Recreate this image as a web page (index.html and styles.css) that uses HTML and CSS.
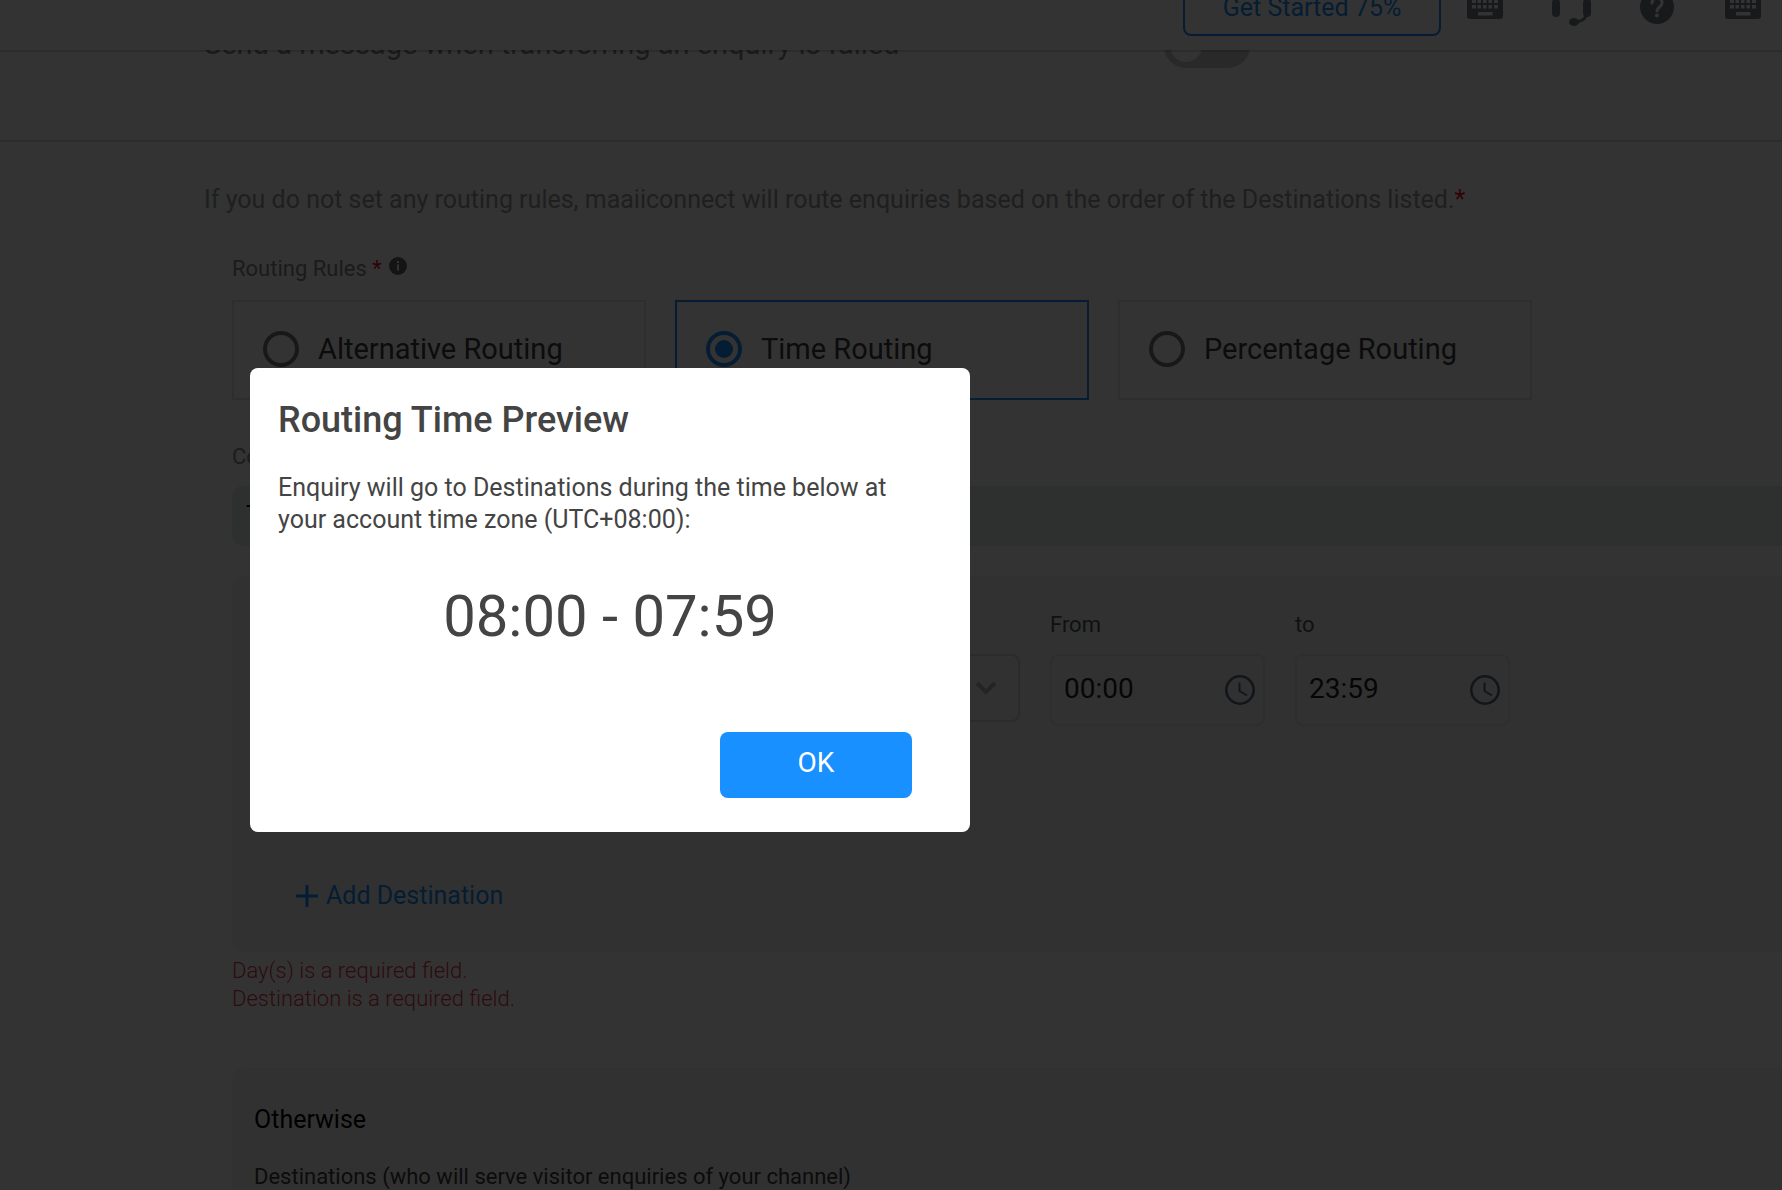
FILE: index.html
```html
<!DOCTYPE html>
<html lang="en">
	<head>
		<meta charset="UTF-8">
		<title>Routing Rules</title>
		<link rel="stylesheet" href="styles.css">
	</head>
	<body>
		<svg class="sprite" width="0" height="0" aria-hidden="true">
			<symbol id="keyboard" viewBox="0 0 36 24">
				<path fill-rule="evenodd" d="M3 0h30a3 3 0 0 1 3 3v18a3 3 0 0 1-3 3H3a3 3 0 0 1-3-3V3a3 3 0 0 1 3-3z
					M5 4v4h4V4z M10.500 4v4h3.500V4z M16 4v4h3.500V4z M21.500 4v4h3.500V4z M27 4v4h4V4z
					M5 10v3.500h4V10z M10.500 10v3.500h3.500V10z M16 10v3.500h3.500V10z M21.500 10v3.500h3.500V10z M27 10v3.500h4V10z
					M11 17v3.500h14.500V17z"/>
			</symbol>
			<symbol id="clock" viewBox="0 0 30 30">
				<g fill="none" stroke="currentColor">
					<circle cx="15" cy="15" r="13.700" stroke-width="2.600"/>
					<path d="M14.500 7.500v8.500l7.500 4.500" stroke-width="2"/>
				</g>
			</symbol>
		</svg>

		<header class="topbar">
			<button class="get-started" type="button">Get Started 75%</button>
			<nav class="tools">
				<button type="button" aria-label="Keyboard">
					<svg width="36" height="24"><use href="#keyboard"/></svg>
				</button>
				<button type="button" aria-label="Support">
					<svg width="40" height="38" viewBox="0 0 40 38">
						<path d="M4.500 16v-1a15.500 13.500 0 0 1 31 0v1M36 26c-2 6-6 8-13 8" fill="none" stroke="currentColor" stroke-width="3"/>
						<rect x="1" y="11" width="8" height="18" rx="4"/>
						<rect x="32" y="11" width="8" height="18" rx="4"/>
						<ellipse cx="23" cy="34" rx="5" ry="4"/>
					</svg>
				</button>
				<button type="button" aria-label="Help">
					<svg width="34" height="34" viewBox="0 0 34 34">
						<circle cx="17" cy="17" r="17"/>
						<path d="M12 13c0-7 10.500-6.500 10 0 0 4-5 4-5 8" fill="none" stroke="#fff" stroke-width="3" stroke-linecap="round"/>
						<circle cx="17" cy="25.500" r="2" fill="#fff"/>
					</svg>
				</button>
				<button type="button" aria-label="Keyboard shortcuts">
					<svg width="36" height="24"><use href="#keyboard"/></svg>
				</button>
			</nav>
		</header>

		<main>
			<section class="transfer">
				<label for="transferMsg">Send a message when transferring an enquiry is failed</label>
				<input id="transferMsg" class="toggle" type="checkbox">
			</section>

			<p class="hint">If you do not set any routing rules, maaiiconnect will route enquiries based on the order of the Destinations listed.<span class="star">*</span></p>

			<section class="rules">
				<div class="rules-title">
					Routing Rules <span class="star">*</span>
					<svg class="info" width="18" height="18" viewBox="0 0 18 18">
						<circle cx="9" cy="9" r="9" fill="currentColor"/>
						<path d="M9 4v2M9 7.500v6" stroke="#fff" stroke-width="2"/>
					</svg>
				</div>
				<div class="rule-list">
					<label class="rule"><input type="radio" name="rule">Alternative Routing</label>
					<label class="rule chosen"><input type="radio" name="rule" checked>Time Routing</label>
					<label class="rule"><input type="radio" name="rule">Percentage Routing</label>
				</div>

				<div class="condition-title">Condition</div>
				<div class="condition">Time</div>

				<div class="panel">
					<div class="fields">
						<div class="field day">
							<label for="day">Day(s)</label>
							<div class="select-box">
								<select id="day"><option></option></select>
								<svg width="22" height="14" viewBox="0 0 22 14"><path d="M2 2l9 9 9-9" fill="none" stroke="currentColor" stroke-width="4"/></svg>
							</div>
						</div>
						<div class="field">
							<label for="from">From</label>
							<div class="time-box">
								<input id="from" type="text" value="00:00">
								<svg width="30" height="30"><use href="#clock"/></svg>
							</div>
						</div>
						<div class="field">
							<label for="to">to</label>
							<div class="time-box">
								<input id="to" type="text" value="23:59">
								<svg width="30" height="30"><use href="#clock"/></svg>
							</div>
						</div>
					</div>
					<button class="add" type="button">
						<svg width="22" height="22" viewBox="0 0 22 22"><path d="M11 0v22M0 11h22" stroke="currentColor" stroke-width="3"/></svg>
						Add Destination
					</button>
				</div>
				<div class="errors">
					<p>Day(s) is a required field.</p>
					<p>Destination is a required field.</p>
				</div>

				<div class="panel otherwise">
					<h3>Otherwise</h3>
					<p>Destinations (who will serve visitor enquiries of your channel)</p>
				</div>
			</section>
		</main>

		<div class="mask">
			<div class="dialog" role="dialog" aria-labelledby="dialogTitle">
				<h2 id="dialogTitle">Routing Time Preview</h2>
				<p class="dialog-text">Enquiry will go to Destinations during the time below at your account time zone (UTC+08:00):</p>
				<p class="dialog-time">08:00 - 07:59</p>
				<button class="ok" type="button">OK</button>
			</div>
		</div>
	</body>
</html>
```
FILE: styles.css
```css
*{margin: 0;padding: 0;box-sizing: border-box;}
body{
	height: 100vh;
	overflow: hidden;
	background: #fff;
	font-family: Roboto, sans-serif;
	font-size: 22px;
	line-height: 30px;
}
button, input, select{
	font-family: inherit;
	background: none;
	border: none;
}
.sprite{position: absolute;}

/* top bar */
.topbar{
	position: relative;
	z-index: 1;
	display: flex;
	justify-content: flex-end;
	align-items: center;
	gap: 24px;
	height: 88px;
	margin-top: -36px;
	padding-right: 19px;
	background: #fff;
	background-clip: padding-box;
	border-bottom: 2px solid rgba(0,0,0,.14);
}
.get-started{
	width: 258px;
	height: 58px;
	border: 2px solid #1890ff;
	border-radius: 8px;
	color: #1890ff;
	font-size: 25px;
}
.tools{
	display: flex;
	gap: 46px;
}
.tools button{
	display: flex;
	justify-content: center;
	align-items: center;
	width: 40px;
	color: #797f86;
}
.tools svg{fill: currentColor;}

/* transfer message */
.transfer{
	display: flex;
	margin-top: -28px;
	padding: 0 0 72px 204px;
	border-bottom: 2px solid #ddd;
	color: #888;
	font-size: 29px;
	line-height: 40px;
}
.transfer label{flex: 0 0 960px;}
.toggle{
	appearance: none;
	width: 86px;
	height: 44px;
	padding: 6px;
	border-radius: 22px;
	background: #ccc;
}
.toggle::before{
	content: "";
	display: block;
	width: 32px;
	height: 32px;
	border-radius: 50%;
	background: #fff;
}

.hint{
	margin: 42px 0 38px 204px;
	color: #999;
	font-size: 25px;
	line-height: 32px;
}
.star{color: #e8112d;}

/* routing rules */
.rules{margin-left: 232px;}
.rules-title, .condition-title{color: #888;}
.info{
	margin-left: 2px;
	vertical-align: 1px;
	color: #666;
}
.rule-list{
	display: flex;
	gap: 29px;
	margin: 16px 0 42px;
}
.rule{
	display: flex;
	align-items: center;
	gap: 19px;
	width: 414px;
	height: 100px;
	padding: 0 29px 2px;
	border: 2px solid #e4e4e4;
	color: #3c3c3c;
	font-size: 29px;
}
.rule input{
	appearance: none;
	width: 36px;
	height: 36px;
	padding: 5px;
	border: 4px solid #777;
	border-radius: 50%;
}
.rule.chosen, .rule input:checked{border-color: #1890ff;}
.rule input:checked::before{
	content: "";
	display: block;
	width: 18px;
	height: 18px;
	border-radius: 50%;
	background: #1890ff;
}
.condition{
	margin: 14px 0 30px;
	padding: 14px;
	border-radius: 10px 0 0 10px;
	background: #e1efeb;
	font-size: 25px;
	line-height: 32px;
}
.panel{
	padding: 34px 64px 40px;
	border-radius: 12px 0 0 12px;
	background: #f5f5f5;
}
.fields{
	display: flex;
	gap: 30px;
	margin-bottom: 154px;
}
.field{
	width: 215px;
	color: #4a5a58;
}
.field.day{width: 724px;}
.select-box, .time-box{
	display: flex;
	align-items: center;
	position: relative;
	margin-top: 14px;
}
.select-box select{
	appearance: none;
	width: 100%;
	height: 68px;
	border: 2px solid #d4d4d4;
	border-radius: 8px;
}
.time-box input{
	width: 100%;
	height: 72px;
	padding: 0 50px 4px 12px;
	border: 2px solid #e4e4e4;
	border-radius: 8px;
	color: #1f1f1f;
	font-size: 28px;
}
.select-box svg, .time-box svg{
	position: absolute;
	right: 10px;
	color: #557089;
}
.select-box svg{
	right: 23px;
	color: #b4b4b4;
}
.add{
	display: flex;
	align-items: center;
	gap: 8px;
	color: #1890ff;
	font-size: 25px;
	line-height: 32px;
}
.errors{
	margin: 5px 0 55px;
	color: #e5394d;
	font-weight: 300;
	line-height: 28px;
}
.otherwise{
	padding: 36px 22px;
	color: #3c3c3c;
}
.otherwise h3{
	margin-bottom: 26px;
	color: #000;
	font-size: 25px;
	font-weight: 400;
	line-height: 32px;
}

/* dialog */
.mask{
	position: fixed;
	top: 0;
	left: 0;
	right: 0;
	bottom: 0;
	z-index: 10;
	padding: 368px 250px;
	background: rgba(0,0,0,.8);
}
.dialog{
	display: flex;
	flex-direction: column;
	max-width: 720px;
	padding: 30px 28px 34px;
	border-radius: 8px;
	background: #fff;
	color: #444;
}
.dialog h2{
	font-size: 36px;
	font-weight: 500;
	line-height: 44px;
}
.dialog-text{
	margin: 30px 0 46px;
	padding-right: 30px;
	font-size: 25px;
	line-height: 32px;
}
.dialog-time{
	font-size: 58px;
	line-height: 68px;
	text-align: center;
}
.ok{
	align-self: flex-end;
	width: 192px;
	height: 66px;
	margin: 82px 30px 0 0;
	padding-bottom: 6px;
	border-radius: 8px;
	background: #1890ff;
	color: #fff;
	font-size: 28px;
}
```
